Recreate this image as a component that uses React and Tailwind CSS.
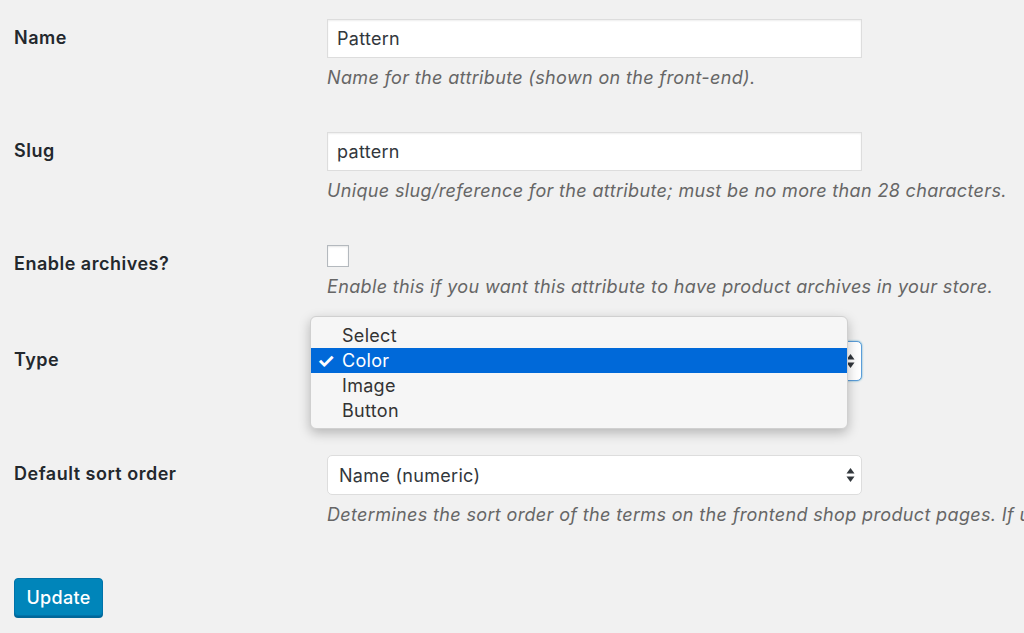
import React from "react";

const font = { fontFamily: "Inter, 'Liberation Sans', sans-serif" };

function Row({ label, children }) {
  return (
    <div className="flex">
      <div className="w-[313px] shrink-0 pt-[6px] text-[18px] leading-[26px] tracking-[0.5px] font-semibold text-[#23282d]">{label}</div>
      <div className="flex flex-col">{children}</div>
    </div>
  );
}

function Desc({ children }) {
  return (
    <p className="mt-[8px] text-[18px] leading-[24px] tracking-[0.35px] italic text-[#666] whitespace-nowrap">{children}</p>
  );
}

function Arrows() {
  return (
    <svg width="9" height="16" viewBox="0 0 9 16" className="shrink-0">
      <path d="M4.5 1 L8.5 6.5 H0.5 Z" fill="#32373c" />
      <path d="M4.5 15 L8.5 9.5 H0.5 Z" fill="#32373c" />
    </svg>
  );
}

export default function App() {
  const options = ["Select", "Color", "Image", "Button"];
  return (
    <div className="w-[1024px] h-[633px] overflow-hidden bg-[#f1f1f1] pl-[14px] pt-[19px]" style={font}>
      <div className="flex flex-col gap-[42px]">
        <Row label="Name">
          <div className="w-[535px] h-[39px] bg-white border border-[#ddd] shadow-[inset_0_1px_2px_rgba(0,0,0,0.07)] flex items-center px-[9px] text-[18px] tracking-[0.3px] text-[#32373c]">
            Pattern
          </div>
          <Desc>Name for the attribute (shown on the front-end).</Desc>
        </Row>

        <Row label="Slug">
          <div className="w-[535px] h-[39px] bg-white border border-[#ddd] shadow-[inset_0_1px_2px_rgba(0,0,0,0.07)] flex items-center px-[9px] text-[18px] tracking-[0.3px] text-[#32373c]">
            pattern
          </div>
          <Desc>Unique slug/reference for the attribute; must be no more than 28 characters.</Desc>
        </Row>

        <Row label="Enable archives?">
          <div className="w-[22px] h-[22px] bg-white border border-[#b4b9be] shadow-[inset_0_1px_2px_rgba(0,0,0,0.1)]" />
          <Desc>Enable this if you want this attribute to have product archives in your store.</Desc>
        </Row>

        <Row label="Type">
          <div className="relative">
            <div className="w-[535px] h-[40px] bg-white border border-[#5b9dd9] rounded-[5px] shadow-[0_0_2px_rgba(30,140,190,0.8)] flex items-center justify-end pr-[6px]">
              <Arrows />
            </div>
            <div className="absolute left-[-17px] top-[-25px] w-[538px] h-[113px] rounded-[6px] bg-[#f6f6f6] border border-[#d0d0d0] shadow-[0_4px_12px_rgba(0,0,0,0.25)] py-[6px] text-[18px] tracking-[0.3px] text-[#333]">
              {options.map((o) => (
                <div
                  key={o}
                  className={
                    o === "Color"
                      ? "h-[25px] flex items-center bg-[#0069d9] text-white"
                      : "h-[25px] flex items-center"
                  }
                >
                  <span className="w-[31px] pl-[6px] text-[20px] font-bold leading-none">{o === "Color" ? "✓" : ""}</span>
                  <span>{o}</span>
                </div>
              ))}
            </div>
          </div>
          <div className="mt-[8px] h-[24px]" />
        </Row>

        <Row label="Default sort order">
          <div className="w-[535px] h-[40px] bg-white border border-[#ddd] rounded-[5px] flex items-center justify-between pl-[11px] pr-[6px] text-[18px] tracking-[0.3px] text-[#32373c]">
            <span>Name (numeric)</span>
            <Arrows />
          </div>
          <Desc>
            Determines the sort order of the terms on the frontend shop product pages. If using custom ordering, you can drag and drop the terms in this attribute.
          </Desc>
        </Row>
      </div>

      <button className="mt-[51px] w-[89px] h-[38px] rounded-[4px] bg-[#0085ba] border border-[#0073aa] shadow-[0_2px_0_#006799] text-white text-[18px] tracking-[0.3px] font-medium">
        Update
      </button>
    </div>
  );
}
